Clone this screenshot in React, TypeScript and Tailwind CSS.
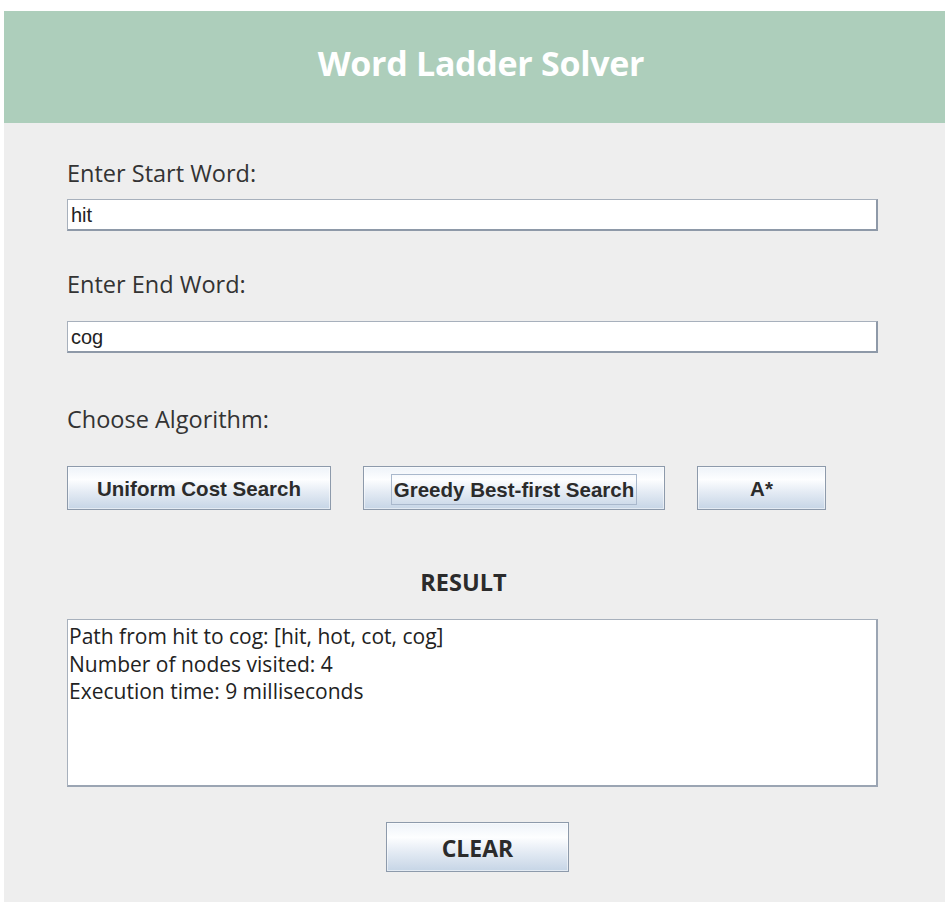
const btn =
  "border border-[#8d9aab] bg-[linear-gradient(to_bottom,#eef3f9_0%,#fdfeff_30%,#e4ebf4_60%,#c6d5e6_100%)] shadow-[inset_0_0_0_1px_rgba(255,255,255,0.5)] flex items-center justify-center";

const field =
  "w-[811px] h-[32px] bg-white border border-[#a7b0bc] border-b-2 border-r-2 border-b-[#8e99a8] border-r-[#8e99a8] px-[3px] pt-[2px] text-[20px] text-[#222] outline-none font-['Liberation_Sans',Arial,sans-serif]";

const label = "text-[23.5px] leading-[28px] text-[#333] font-['Open_Sans',sans-serif]";

export default function App() {
  return (
    <div className="w-[946px] h-[904px] bg-white pt-[11px] pl-[4px]">
      <div className="w-[941px] h-[891px] bg-[#eeeeee] flex flex-col">
        <div className="h-[112px] bg-[#adcebb] flex items-center justify-center pb-[8px] pl-[13px]">
          <h1 className="text-white text-[34px] font-bold font-['Open_Sans',sans-serif] tracking-[-0.3px]">
            Word Ladder Solver
          </h1>
        </div>

        <div className="px-[63px] flex flex-col">
          <p className={label + " mt-[36px]"}>Enter Start Word:</p>
          <input readOnly defaultValue="hit" className={field + " mt-[12px]"} />

          <p className={label + " mt-[39px]"}>Enter End Word:</p>
          <input readOnly defaultValue="cog" className={field + " mt-[23px]"} />

          <p className={label + " mt-[52px]"}>Choose Algorithm:</p>

          <div className="mt-[33px] h-[44px] flex gap-[32px] font-['Liberation_Sans',Arial,sans-serif] font-bold text-[20.5px] text-[#2b2b2b]">
            <button className={btn + " h-[44px] w-[264px] pt-[3px]"}>Uniform Cost Search</button>
            <button className={btn + " h-[44px] w-[302px] pt-[3px]"}>
              <span className="border border-[#a9b8cc] px-[2px] py-[3px] leading-[23px]">
                Greedy Best-first Search
              </span>
            </button>
            <button className={btn + " h-[44px] w-[129px] pt-[3px]"}>A*</button>
          </div>

          <p className="mt-[58px] w-[793px] text-center text-[23.5px] leading-[28px] font-bold text-[#2b2b2b] font-['Open_Sans',sans-serif]">
            RESULT
          </p>

          <div className="mt-[23px] w-[811px] h-[168px] bg-white border border-[#a7b0bc] border-b-2 border-r-2 border-b-[#9ba5b3] border-r-[#9ba5b3] px-[1px] pt-[3px] text-[21px] leading-[27.5px] text-[#222] font-['Open_Sans',sans-serif]">
            <p>Path from hit to cog: [hit, hot, cot, cog]</p>
            <p>Number of nodes visited: 4</p>
            <p>Execution time: 9 milliseconds</p>
          </div>

          <div className="mt-[35px] w-[811px] flex justify-center">
            <button
              className={
                btn +
                " w-[183px] h-[50px] ml-[10px] pt-[3px] text-[23px] font-bold text-[#2b2b2b] font-['Open_Sans',sans-serif]"
              }
            >
              CLEAR
            </button>
          </div>
        </div>
      </div>
    </div>
  );
}
